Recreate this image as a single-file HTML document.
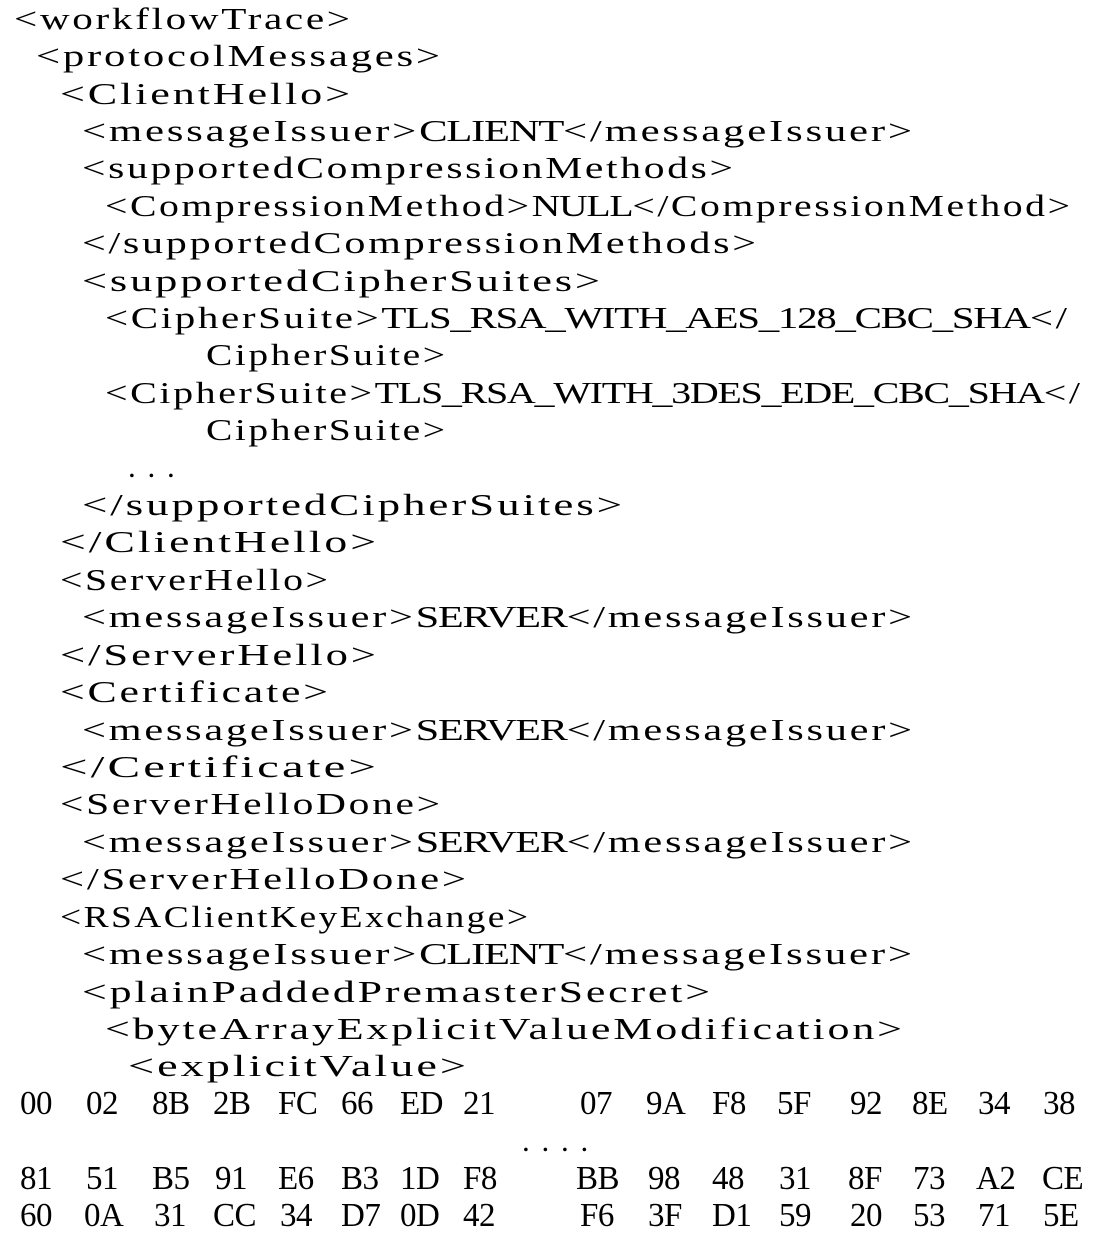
<!DOCTYPE html>
<html><head><meta charset="utf-8"><style>
body{margin:0;background:#fff;width:1120px;height:1250px;position:relative;overflow:hidden;font-family:"Liberation Serif",serif;color:#000}
.l{position:absolute;height:37px;line-height:37px;font-size:31px;white-space:pre;letter-spacing:2px;transform-origin:0 50%}
.c{letter-spacing:-1px}
.h{position:absolute;font-size:34px;line-height:37px;height:37px;letter-spacing:-0.5px;transform:scaleX(0.97);transform-origin:0 50%}
</style></head><body>
<div class="l" data-r="350" style="top:0;left:14px">&lt;workflowTrace&gt;</div>
<div class="l" data-r="440" style="top:37px;left:36px">&lt;protocolMessages&gt;</div>
<div class="l" data-r="350" style="top:75px;left:60px">&lt;ClientHello&gt;</div>
<div class="l" data-r="912" style="top:112px;left:82px">&lt;messageIssuer&gt;<span class="c">CLIENT</span>&lt;/messageIssuer&gt;</div>
<div class="l" data-r="733" style="top:149px;left:82px">&lt;supportedCompressionMethods&gt;</div>
<div class="l" data-r="1070" style="top:187px;left:105px">&lt;CompressionMethod&gt;<span class="c">NULL</span>&lt;/CompressionMethod&gt;</div>
<div class="l" data-r="756" style="top:224px;left:82px">&lt;/supportedCompressionMethods&gt;</div>
<div class="l" data-r="600" style="top:262px;left:82px">&lt;supportedCipherSuites&gt;</div>
<div class="l" data-r="1067" style="top:299px;left:105px">&lt;CipherSuite&gt;<span class="c">TLS_RSA_WITH_AES_128_CBC_SHA</span>&lt;/</div>
<div class="l" data-r="445" style="top:336px;left:206px">CipherSuite&gt;</div>
<div class="l" data-r="1080" style="top:374px;left:105px">&lt;CipherSuite&gt;<span class="c">TLS_RSA_WITH_3DES_EDE_CBC_SHA</span>&lt;/</div>
<div class="l" data-r="445" style="top:411px;left:206px">CipherSuite&gt;</div>
<div class="l" style="top:448px;left:128px">. . .</div>
<div class="l" data-r="622" style="top:486px;left:82px">&lt;/supportedCipherSuites&gt;</div>
<div class="l" data-r="376" style="top:523px;left:60px">&lt;/ClientHello&gt;</div>
<div class="l" data-r="328" style="top:561px;left:60px">&lt;ServerHello&gt;</div>
<div class="l" data-r="912" style="top:598px;left:82px">&lt;messageIssuer&gt;<span class="c">SERVER</span>&lt;/messageIssuer&gt;</div>
<div class="l" data-r="376" style="top:636px;left:60px">&lt;/ServerHello&gt;</div>
<div class="l" data-r="328" style="top:673px;left:60px">&lt;Certificate&gt;</div>
<div class="l" data-r="912" style="top:711px;left:82px">&lt;messageIssuer&gt;<span class="c">SERVER</span>&lt;/messageIssuer&gt;</div>
<div class="l" data-r="376" style="top:748px;left:60px">&lt;/Certificate&gt;</div>
<div class="l" data-r="440" style="top:785px;left:60px">&lt;ServerHelloDone&gt;</div>
<div class="l" data-r="912" style="top:823px;left:82px">&lt;messageIssuer&gt;<span class="c">SERVER</span>&lt;/messageIssuer&gt;</div>
<div class="l" data-r="466" style="top:860px;left:60px">&lt;/ServerHelloDone&gt;</div>
<div class="l" data-r="528" style="top:898px;left:60px">&lt;RSAClientKeyExchange&gt;</div>
<div class="l" data-r="912" style="top:935px;left:82px">&lt;messageIssuer&gt;<span class="c">CLIENT</span>&lt;/messageIssuer&gt;</div>
<div class="l" data-r="710" style="top:973px;left:82px">&lt;plainPaddedPremasterSecret&gt;</div>
<div class="l" data-r="902" style="top:1010px;left:105px">&lt;byteArrayExplicitValueModification&gt;</div>
<div class="l" data-r="466" style="top:1047px;left:128px">&lt;explicitValue&gt;</div>
<div class="l" style="top:1122px;left:522px">. . . .</div>
<div class="h" style="top:1085px;left:20px">00</div><div class="h" style="top:1085px;left:86px">02</div><div class="h" style="top:1085px;left:152px">8B</div><div class="h" style="top:1085px;left:213px">2B</div><div class="h" style="top:1085px;left:278px">FC</div><div class="h" style="top:1085px;left:341px">66</div><div class="h" style="top:1085px;left:400px">ED</div><div class="h" style="top:1085px;left:463px">21</div><div class="h" style="top:1085px;left:580px">07</div><div class="h" style="top:1085px;left:646px">9A</div><div class="h" style="top:1085px;left:712px">F8</div><div class="h" style="top:1085px;left:777px">5F</div><div class="h" style="top:1085px;left:850px">92</div><div class="h" style="top:1085px;left:912px">8E</div><div class="h" style="top:1085px;left:978px">34</div><div class="h" style="top:1085px;left:1043px">38</div>
<div class="h" style="top:1160px;left:20px">81</div><div class="h" style="top:1160px;left:86px">51</div><div class="h" style="top:1160px;left:152px">B5</div><div class="h" style="top:1160px;left:215px">91</div><div class="h" style="top:1160px;left:278px">E6</div><div class="h" style="top:1160px;left:341px">B3</div><div class="h" style="top:1160px;left:400px">1D</div><div class="h" style="top:1160px;left:463px">F8</div><div class="h" style="top:1160px;left:576px">BB</div><div class="h" style="top:1160px;left:648px">98</div><div class="h" style="top:1160px;left:712px">48</div><div class="h" style="top:1160px;left:779px">31</div><div class="h" style="top:1160px;left:848px">8F</div><div class="h" style="top:1160px;left:913px">73</div><div class="h" style="top:1160px;left:976px">A2</div><div class="h" style="top:1160px;left:1042px">CE</div>
<div class="h" style="top:1197px;left:20px">60</div><div class="h" style="top:1197px;left:84px">0A</div><div class="h" style="top:1197px;left:154px">31</div><div class="h" style="top:1197px;left:213px">CC</div><div class="h" style="top:1197px;left:280px">34</div><div class="h" style="top:1197px;left:341px">D7</div><div class="h" style="top:1197px;left:400px">0D</div><div class="h" style="top:1197px;left:463px">42</div><div class="h" style="top:1197px;left:580px">F6</div><div class="h" style="top:1197px;left:648px">3F</div><div class="h" style="top:1197px;left:712px">D1</div><div class="h" style="top:1197px;left:779px">59</div><div class="h" style="top:1197px;left:850px">20</div><div class="h" style="top:1197px;left:913px">53</div><div class="h" style="top:1197px;left:978px">71</div><div class="h" style="top:1197px;left:1043px">5E</div>
<script>
document.querySelectorAll('.l[data-r]').forEach(function(e){
  var w=e.getBoundingClientRect().width-2;
  var t=parseFloat(e.getAttribute('data-r'))-parseFloat(e.style.left);
  if(w>0)e.style.transform='scaleX('+(t/w)+')';
});
</script>
</body></html>
